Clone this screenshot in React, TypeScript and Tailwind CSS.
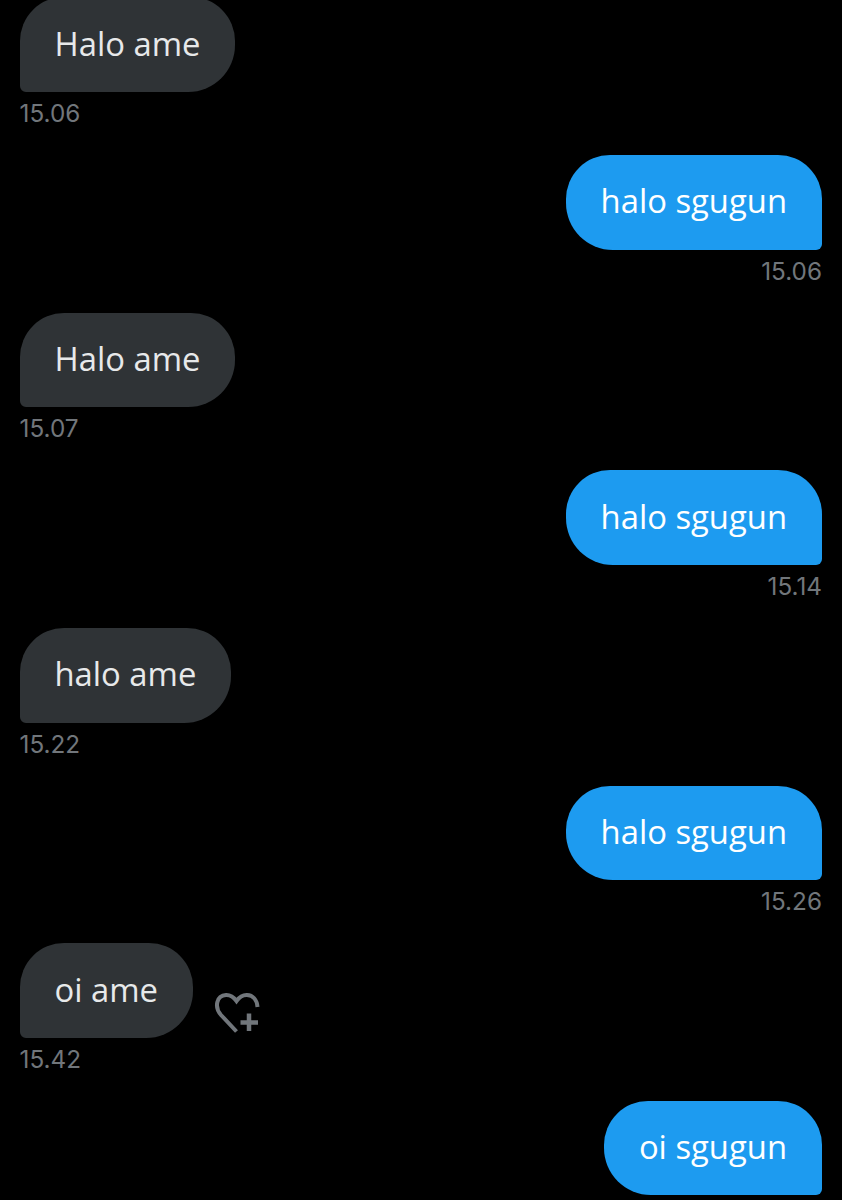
import * as React from 'react';

type Message = {
  id: number;
  text: string;
  time: string;
  mine: boolean;
  react?: boolean;
};

const messages: Message[] = [
  { id: 1, text: 'Halo ame', time: '15.06', mine: false },
  { id: 2, text: 'halo sgugun', time: '15.06', mine: true },
  { id: 3, text: 'Halo ame', time: '15.07', mine: false },
  { id: 4, text: 'halo sgugun', time: '15.14', mine: true },
  { id: 5, text: 'halo ame', time: '15.22', mine: false },
  { id: 6, text: 'halo sgugun', time: '15.26', mine: true },
  { id: 7, text: 'oi ame', time: '15.42', mine: false, react: true },
  { id: 8, text: 'oi sgugun', time: '', mine: true },
];

function HeartPlus(): React.JSX.Element {
  return (
    <svg width="46" height="42" viewBox="0 0 46 42" fill="none" stroke="#71767b" strokeWidth="4" className="mt-[49px] shrink-0">
      <path d="M22.5 39.5 L7 23 C0 15 2.5 3.5 12 3 C17 2.8 20 5.5 22.5 9 C25 5.5 28 2.8 33 3 C39 3.2 43 8 43.5 15" />
      <path d="M35 21.5 V39 M26.5 30.5 H44" strokeWidth="4.5" />
    </svg>
  );
}

function Bubble({ message }: { message: Message }): React.JSX.Element {
  const shape = message.mine
    ? 'rounded-tl-[44px] rounded-tr-[44px] rounded-bl-[47px] rounded-br-[6px] bg-[#1d9bf0] text-white'
    : 'rounded-tl-[44px] rounded-tr-[44px] rounded-br-[47px] rounded-bl-[6px] bg-[#2f3336] text-[#e7e9ea]';
  return (
    <div className={`flex h-[94.6px] items-center px-[35px] pb-[1px] text-[32.8px] leading-none ${shape}`}>
      {message.text}
    </div>
  );
}

export default function App(): React.JSX.Element {
  return (
    <div className="h-[1200px] w-[842px] overflow-hidden bg-black font-['Open_Sans',sans-serif]">
      <div className="-mt-[2.6px] flex flex-col pl-[19.5px] pr-5">
        {messages.map((message) => (
          <div key={message.id} className={`flex h-[157.65px] flex-col ${message.mine ? 'items-end' : 'items-start'}`}>
            <div className="flex gap-[21px]">
              <Bubble message={message} />
              {message.react ? <HeartPlus /> : null}
            </div>
            <div className="mt-[6px] font-['Inter',sans-serif] text-[24.3px] leading-[30px] text-[#71767b]">{message.time}</div>
          </div>
        ))}
      </div>
    </div>
  );
}
